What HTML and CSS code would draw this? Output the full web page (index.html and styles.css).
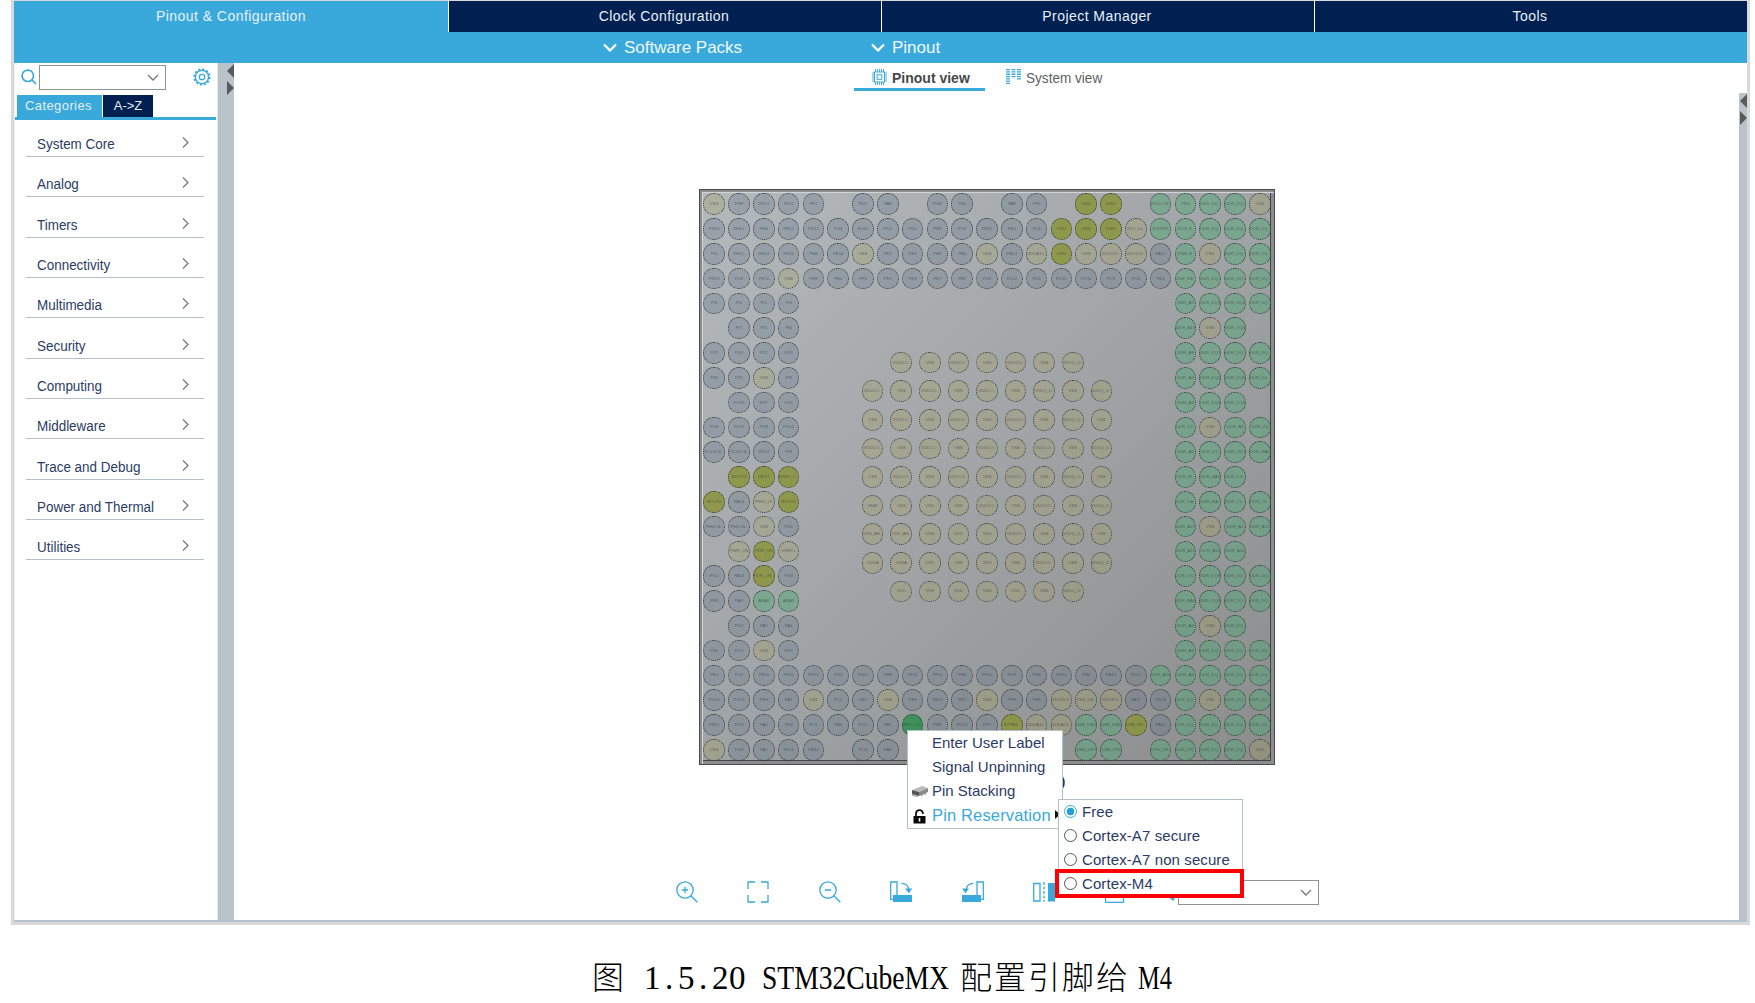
FILE: index.html
```html
<!DOCTYPE html>
<html lang="zh">
<head>
<meta charset="utf-8">
<title>STM32CubeMX</title>
<link rel="stylesheet" href="styles.css">
</head>
<body>
<div class="window">
  <nav class="tabs">
    <div class="tab active"><span>Pinout &amp; Configuration</span></div>
    <div class="tab"><span>Clock Configuration</span></div>
    <div class="tab"><span>Project Manager</span></div>
    <div class="tab"><span>Tools</span></div>
  </nav>
  <div class="subbar">
    <div class="drop packs"><svg width="14" height="9" viewBox="0 0 14 9"><path d="M1 1.5l6 6 6-6" fill="none" stroke="#fff" stroke-width="2.2"/></svg><span>Software Packs</span></div>
    <div class="drop"><svg width="14" height="9" viewBox="0 0 14 9"><path d="M1 1.5l6 6 6-6" fill="none" stroke="#fff" stroke-width="2.2"/></svg><span>Pinout</span></div>
  </div>
  <div class="main">
    <aside class="side">
      <div class="search">
        <svg class="mag" width="16" height="16" viewBox="0 0 16 16" fill="none" stroke="#39a9dc" stroke-width="1.7"><circle cx="6.8" cy="6.8" r="5.7"/><path d="M11 11l4 4"/></svg>
        <div class="combo"><svg width="12" height="7" viewBox="0 0 12 7"><path d="M1 1l5 5 5-5" fill="none" stroke="#777" stroke-width="1.3"/></svg></div>
        <svg class="gear" width="18" height="18" viewBox="-9 -9 18 18" fill="none" stroke="#39a9dc"><circle r="6.6" stroke-width="1.3"/><circle r="7.7" stroke-width="1.8" stroke-dasharray="2.1 1.93"/><circle r="2.7" stroke-width="1.3"/></svg>
      </div>
      <div class="sidetabs"><div class="st on">Categories</div><div class="st">A-&gt;Z</div></div>
      <ul class="cats" id="cats"></ul>
    </aside>
    <div class="splitter"><i class="tri left"></i><i class="tri right"></i></div>
    <section class="view">
      <div class="viewtabs">
        <div class="vt on">
          <svg width="15" height="16" viewBox="0 0 15 16" fill="none" stroke="#39a9dc"><rect x="2.5" y="3" width="10" height="10"/><rect x="5.2" y="5.7" width="4.6" height="4.6"/><path d="M3.5 0v3M5.5 0v3M7.5 0v3M9.5 0v3M11.5 0v3M3.5 13v3M5.5 13v3M7.5 13v3M9.5 13v3M11.5 13v3M0 4h2.5M0 6h2.5M0 8h2.5M0 10h2.5M0 12h2.5M12.5 4h2.5M12.5 6h2.5M12.5 8h2.5M12.5 10h2.5M12.5 12h2.5" stroke-width=".9"/></svg>
          <span>Pinout view</span>
        </div>
        <div class="vt">
          <svg width="15" height="15" viewBox="0 0 15 15" fill="none" stroke="#39a9dc" stroke-width="4"><path d="M2 0v15" stroke-dasharray="1.3 1"/><path d="M7.5 0v8.5M13 0v10.5" stroke-dasharray="1.3 1"/></svg>
          <span>System view</span>
        </div>
      </div>
      <div class="canvas">
        <div class="chip"><div class="pins" id="outer"></div><div class="pins balls" id="inner"></div></div>
      </div>
      <div class="tools">
        <svg viewBox="0 0 22 22"><circle cx="9" cy="9" r="8.2"/><path d="M14.8 14.8l6.5 6.5M5.8 9h6.4M9 5.8v6.4"/></svg>
        <svg viewBox="0 0 22 22"><path d="M1 8V1h7M14 1h7v7M21 14v7h-7M8 21H1v-7"/></svg>
        <svg viewBox="0 0 22 22"><circle cx="9" cy="9" r="8.2"/><path d="M14.8 14.8l6.5 6.5M5.8 9h6.4"/></svg>
        <svg viewBox="0 0 22 22"><path d="M3 18.3H.7V1H7v13M11.5 2.3c4 0 7 2.5 7.500 7"/><path class="solid" d="M15 7.500l4 4.800 3.200-4.800zM3 14h19v7H3z"/></svg>
        <svg viewBox="0 0 22 22"><path d="M19 18.3h2.300V1H15v13M11.500 2.3c-4 0-7 2.5-7.500 7"/><path class="solid" d="M0 7.500h7L3.500 12.300zM0 14h19v7H0z"/></svg>
        <svg viewBox="0 0 22 22"><path d="M.7 2.500H7V20H.7z"/><path d="M11 1v20" stroke-dasharray="3 1.500"/><path class="solid" d="M15 2h7v18.500h-7z"/></svg>
        <svg viewBox="0 0 22 22"><path d="M1.500 2h18v19.300h-18z"/></svg>
        <svg class="find" viewBox="0 0 22 22"><circle cx="9" cy="9" r="7"/><path d="M13 14l6 5" stroke-width="2.500"/></svg>
        <div class="combo wide"><svg width="12" height="7" viewBox="0 0 12 7"><path d="M1 1l5 5 5-5" /></svg></div>
      </div>
    </section>
    <div class="splitter slim"><i class="tri left"></i><i class="tri right"></i></div>
  </div>
</div>
<svg class="caption" width="1755" height="78" viewBox="0 925 1755 78">
  <g class="han"><text x="592" y="989">图</text><text x="960" y="989" textLength="168">配置引脚给</text></g>
  <g class="latin"><text x="644 665 678 699 712 729" y="989">1.5.20</text><text x="762" y="989" textLength="187" lengthAdjust="spacingAndGlyphs">STM32CubeMX</text><text x="1138" y="989" textLength="34" lengthAdjust="spacingAndGlyphs">M4</text></g>
</svg>
<span class="paren">)</span>
<div class="menu">
  <div class="mi"><b></b><span>Enter User Label</span></div>
  <div class="mi"><b></b><span>Signal Unpinning</span></div>
  <div class="mi"><b><svg width="16" height="12" viewBox="0 0 16 12"><path d="M0 5l10-4 6 2-9 4z" fill="#bbb"/><path d="M0 5l7 2v4L0 9z" fill="#555"/><path d="M7 7l9-4v4l-9 4z" fill="#888"/><path d="M1 9v2M3 9.500v2M5 10v2M10 9v2M13 8v2" stroke="#666"/></svg></b><span>Pin Stacking</span></div>
  <div class="mi big"><b><svg width="13" height="15" viewBox="0 0 13 15"><path d="M3 8V4.500a3.500 3.500 0 0 1 6.800-1V5" fill="none" stroke="#111" stroke-width="1.800"/><path d="M.5 7h12v7.500H.5z" fill="#0a0a0a"/><path d="M6.500 9v3.500" stroke="#fff" stroke-width="1.600"/></svg></b><span>Pin Reservation</span></div>
  <i class="more"></i>
</div>
<div class="submenu">
  <div class="ri"><i class="radio sel"></i><span>Free</span></div>
  <div class="ri"><i class="radio"></i><span>Cortex-A7 secure</span></div>
  <div class="ri"><i class="radio"></i><span>Cortex-A7 non secure</span></div>
  <div class="ri"><i class="radio"></i><span>Cortex-M4</span></div>
</div>
<div class="marker"></div>
<script src="app.js"></script>
</body>
</html>
```
FILE: styles.css
```css
* { box-sizing: border-box; }
body { margin: 0; width: 1755px; height: 1003px; overflow: hidden; background: #fff; font-family: "Liberation Sans", Arial, sans-serif; position: relative; }
svg { display: block; flex: none; }

.window { margin-left: 11px; width: 1739px; height: 925px; border: 3px solid #d9d9d9; border-top: 1px solid #d9d9d9; display: flex; flex-direction: column; }
.tabs { height: 31px; display: grid; grid-template-columns: 434px 433px 433px 433px; background: #002052; color: #e9eff6; font-size: 14px; flex: none; }
.tab { border-left: 1px solid #fff; text-align: center; line-height: 31px; letter-spacing: .45px; padding-right: 2px; white-space: nowrap; }
.tab.active { background: #39a9dc; border-left: 0; padding-right: 0; }
.subbar { height: 31px; flex: none; background: #39a9dc; display: flex; color: #f1f8fc; font-size: 17px; padding-left: 589px; }
.drop { display: flex; align-items: center; gap: 7px; }
.drop.packs { width: 268px; }

.main { flex: 1; display: flex; border-bottom: 2px solid #b4c3ce; min-height: 0; }
.side { width: 204px; border-right: 1px solid #e0e6ea; border-left: 1px solid #eee; flex: none; }
.search { display: flex; height: 32px; padding: 2px 0 0 6px; }
.mag { margin-top: 4px; }
.combo { border: 1px solid #8c9196; display: flex; align-items: center; justify-content: flex-end; width: 127px; height: 25px; padding-right: 6px; margin-left: 2px; fill: none; }
.gear { margin: 3px 0 0 27px; }
.sidetabs { display: flex; gap: 1px; padding-left: 2px; height: 25px; border-bottom: 3px solid #39a9dc; margin-right: 1px; }
.st { width: 50px; text-align: center; background: #002052; color: #e6edf5; font-size: 13px; line-height: 22px; }
.st.on { width: 85px; background: #39a9dc; letter-spacing: .4px; padding-right: 2px; }
.cats { list-style: none; margin: 0; padding: 0 13px 0 11px; }
.cats li { height: 40.33px; border-bottom: 1px solid #b4c0ca; display: flex; justify-content: space-between; align-items: flex-end; padding: 0 15px 3px 12px; color: #2a3c66; font-size: 14px; line-height: 17px; }
.cats li span { transform: scaleX(.96); transform-origin: 0 0; margin-left: -1px; }
.cats li:first-child { height: 37px; }
.cats li svg { margin-bottom: 5px; }

.splitter { width: 16px; background: #b8c3ca; flex: none; padding-top: 1px; display: flex; flex-direction: column; align-items: flex-end; gap: 3px; }
.splitter.slim { width: 8px; margin-top: 30px; }
.tri { width: 7px; height: 14px; background: #585a5c; }
.tri.left { clip-path: polygon(100% 0, 100% 100%, 0 50%); }
.tri.right { clip-path: polygon(0 0, 100% 50%, 0 100%); }

.view { flex: 1; display: flex; flex-direction: column; min-width: 0; }
.viewtabs { flex: none; display: flex; padding-left: 620px; height: 28px; font-size: 14px; color: #5c5f63; }
.vt { height: 28px; width: 131px; padding-left: 18px; display: flex; align-items: center; gap: 5px; white-space: nowrap; }
.vt.on { font-weight: bold; color: #46494c; border-bottom: 3px solid #39a9dc; }
.vt + .vt { padding: 0 0 3px 21px; gap: 5px; }
.vt + .vt span { transform: scaleX(.97); transform-origin: 0 0; }
.vt span { position: relative; top: 2px; }
.vt svg { margin-top: 2px; }
.canvas { flex: none; height: 789px; padding: 98px 0 0 465px; }
.chip { width: 576px; height: 576px; display: grid; place-items: center; border: 1px solid #4a4b4c; background: linear-gradient(135deg, #b4b9bc, #a0a4a6 50%, #8c8c8c); box-shadow: inset 2px 2px #8a8c8e, inset 3px 3px #d2d5d7, inset -3px -3px #8b8c8d, inset -4px -4px #454647; }
.pins { grid-area: 1 / 1; display: grid; grid-template-columns: repeat(23, 24.8px); grid-auto-rows: 24.8px; place-items: center; }
.pins.balls { grid-template-columns: repeat(9, 28.6px); grid-auto-rows: 28.6px; }
.pin { width: 21.500px; height: 21.500px; border: 1px dotted rgba(40,44,48,.9); border-radius: 50%; display: flex; align-items: center; justify-content: center; font-size: 4.300px; line-height: 6px; color: rgba(45,48,52,.62); white-space: nowrap; }
.io { background: rgba(94,114,132,.31); }
.power { background: rgba(160,158,95,.31); }
.fixed { background: rgba(84,165,119,.5); }
.boot { background: rgba(137,148,55,.82); }
.used { background: #3f915b; }

.tools { flex: none; display: flex; padding-left: 442px; height: 30px; align-items: flex-start; }
.tools > svg { width: 22px; height: 22px; margin: 1px 49.400px 0 0; fill: none; stroke: #39a9dc; stroke-width: 1.300; overflow: visible; }
.tools .solid { fill: #39a9dc; stroke: none; }
.tools > .find { margin-right: 0; margin-left: -21px; }
.combo.wide { width: 141px; margin: 0 0 0 1px; stroke: #777; stroke-width: 1.300; }

.caption { fill: #000; }
.han { font: 300 32px "Noto Sans CJK SC", sans-serif; }
.latin { font: 33px "Liberation Serif", serif; }

.menu, .submenu { position: absolute; background: #fff; border: 1px solid #b4c0c9; color: #2b3a68; font-size: 15px; white-space: nowrap; }
.menu { left: 907px; top: 730px; width: 156px; height: 99px; }
.mi { height: 24px; display: flex; align-items: center; }
.mi span, .ri span { position: relative; top: -1px; }
.mi b { width: 24px; padding-left: 4px; }
.mi.big { height: 26px; color: #39a9dc; font-size: 16.500px; letter-spacing: .15px; }
.mi.big b { padding-left: 5px; }
.more { position: absolute; left: 147px; top: 79px; width: 5px; height: 9px; background: #111; clip-path: polygon(0 0, 100% 50%, 0 100%); }
.submenu { left: 1058px; top: 799px; width: 185px; height: 98px; letter-spacing: .1px; }
.ri { height: 24px; display: flex; align-items: center; gap: 5px; padding-left: 5px; position: relative; top: -1px; }
.ri span { top: 0; }
.radio { width: 13px; height: 13px; border: 1px solid #555; border-radius: 50%; }
.radio.sel { border-color: #39a9dc; background: radial-gradient(circle, #279fd8 3.500px, #fff 4.200px); }
.marker { position: absolute; left: 1055px; top: 869px; width: 189px; height: 29px; border: 4px solid #f00; }
.paren { position: absolute; left: 1060px; top: 773px; font-size: 17px; line-height: 18px; color: #222; }
```
FILE: app.js
```javascript
const cats = ["System Core", "Analog", "Timers", "Connectivity", "Multimedia", "Security", "Computing", "Middleware", "Trace and Debug", "Power and Thermal", "Utilities"];
document.getElementById("cats").innerHTML = cats.map(c =>
  `<li><span>${c}</span><svg width="7" height="11" viewBox="0 0 7 11"><path d="M1 .5l5 5-5 5" fill="none" stroke="#777" stroke-width="1.2"/></svg></li>`).join("");

// One string per ball row; "-" is an unpopulated position, "~" a truncated name.
const gap = " - - - - - - - - - - - - - - - ";
const outer = [
  "VSS PH9 PE13 PE11 PF1 - PD5 PA9 - PG8 PB3 - PA8 PF2 - DNU DNU - JTDO-TR~ JTDI DDR_DQ~ DDR_DQ~ VSS",
  "PH15 PH12 PH6 PE12 PD15 PG4 PG15 PD0 PD1 PB9 PG7 PB15 PE4 PC6 DNU DNU DNU VDD_Us~ NJTRST JTCK-S~ DDR_DQ~ DDR_DQ~ DDR_DQ~",
  "PI0 PH15 PH14 PH11 PH8 PE14 VSS PE1 PE3 PE6 PB5 VSS PB14 VDDA1V~ DNU VSS VDD1V2~ VDD1V2~ PA15 JTMS-S~ VSS DDR_DQ~ DDR_DQ~",
  "PH13 PD8 PE15 VSS PH8 PE0 PF5 PF0 PF4 PD7 PB7 PD2 PC12 PD3 PC10 PC11 PC9 PC8 PE4 DDR_RE~ DDR_DQ~ DDR_DQ~ DDR_DQ~",
  "PI3 PI2 PI1 PI4" + gap + "DDR_A7 DDR_DQ3 DDR_DQ0 DDR_DQ~",
  "- PI7 PI5 PI6" + gap + "DDR_A13 VSS DDR_DQ1 -",
  "PZ1 PZ0 PZ2 PZ3" + gap + "DDR_A9 DDR_DQ7 DDR_DQ~ DDR_DQ~",
  "PZ6 PZ5 VSS PI9" + gap + "DDR_A5 DDR_DQ2 DDR_DQ6 DDR_DQ~",
  "- PG15 PZ7 PZ2" + gap + "DDR_A2 DDR_DQ4 DDR_DQ5 -",
  "PD9 PC13 PD8 PG12" + gap + "DDR_DT~ VSS DDR_A3 DDR_ZQ",
  "PC15OS~ PC14OS~ PD14 PI8" + gap + "DDR_A0 DDR_DT~ DDR_ODT DDR_BA0",
  "- BOOT2 NRST NRST_C~" + gap + "DDR_W~ DDR_BA2 DDR_CS~ -",
  "BOOT0 PA13 PWR_LP BOOT1" + gap + "DDR_CA~ DDR_RA~ DDR_CL~ DDR_CL~",
  "PH0OS~ PH1OS~ VSS PI11" + gap + "DDR_A15 VSS DDR_A1 DDR_A12",
  "- PWR_ON PDR_ON VREF+" + gap + "DDR_A11 DDR_A14 DDR_A10 -",
  "PI10 PA14 PDR_ON~ PG3" + gap + "DDR_CK~ DDR_DQ8 DDR_DQ~ DDR_DQ~",
  "PF3 PA3 ANA0 ANA1" + gap + "DDR_BA1 DDR_DQ9 DDR_DQ~ DDR_DQ~",
  "- PG2 PA5 PA4" + gap + "DDR_A4 VSS DDR_DQ~ -",
  "PG1 PC3 VSS PH7" + gap + "DDR_A6 DDR_DQ~ DDR_DQ~ DDR_DQ~",
  "PE2 PC2 PB10 PF15 PF13 PG5 PG11 PB8 PF12 PF11 PH6 PF10 PG9 PE8 PE10 PB2 PA10 PD12 DDR_A10 DDR_A8 DDR_DQ~ DDR_DQ~ DDR_DQ~",
  "PG14 PG13 PH3 PA1 VSS PC1 PB1 VSS PE9 PB13 PE7 VSS PF8 PF9 VDD3V3~ VSS_US~ VDD3V3~ PA11 PD13 DDR_DQ~ VSS DDR_DQ~ DDR_DQ~",
  "PB11 PG4 PA0 PH2 PC0 PB0 PC5 PA7 GPIO_Ou~ PB8 PG10 PF7 BYPAS~ VDDA1V~ VDDA1V~ USB_DM2 USB_DM1 USB_RR~ PA12 DDR_DQ~ DDR_DQ~ DDR_DQ~ DDR_DQ~",
  "VSS PG8 PA2 PF14 PB12 - PC4 PA6 - - - - - - - USB_DP2 USB_DP1 - OTG_VB~ DDR_VR~ DDR_DQ~ DDR_DQ~ VSS"
];
const inner = [
  "- VDDCO~ VSS VDDCO~ VSS VDDCO~ VSS VDDQ_D~ -",
  "VDDCO~ VSS VDDCO~ VSS VDDCO~ VSS VDDQ_D~ VSS VDDQ_D~",
  "VSS VDDCO~ VSS VDDCO~ VSS VDDCO~ VSS VDDQ_D~ VSS",
  "VDDCO~ VSS VDDCO~ VSS VDDCO~ VSS VDDCO~ VSS VDDQ_D~",
  "VSS VDDCO~ VSS VDDCO~ VSS VDDCO~ VSS VDDQ_D~ VSS",
  "VBAT VSS VDD VSS VDDCO~ VSS VDDCO~ VSS VDDQ_D~",
  "VSS_AN~ VDD_AN~ VSS VDD VSS VDDCO~ VSS VDDQ_D~ VSS",
  "VDDA VSSA VDD VSS VDD VSS VDDCO~ VSS VDDQ_D~",
  "- VDD VSS VDD VSS VDD VSS VDDQ_D~ -"
];
function kind(n) {
  if (/^GPIO/.test(n)) return "used";
  if (/^(DNU|BOOT|NRST|PDR|BYPAS|USB_RR)/.test(n)) return "boot";
  if (/^(V|PWR)/.test(n)) return "power";
  if (/^(DDR|J|NJ|ANA|USB|OTG)/.test(n)) return "fixed";
  return "io";
}
function fill(id, rows) {
  document.getElementById(id).innerHTML = rows.map(r => r.split(/\s+/).map(n =>
    n === "-" ? "<div></div>" : `<div class="pin ${kind(n)}">${n.replace("~", "..")}</div>`).join("")).join("");
}
fill("outer", outer);
fill("inner", inner);
```
